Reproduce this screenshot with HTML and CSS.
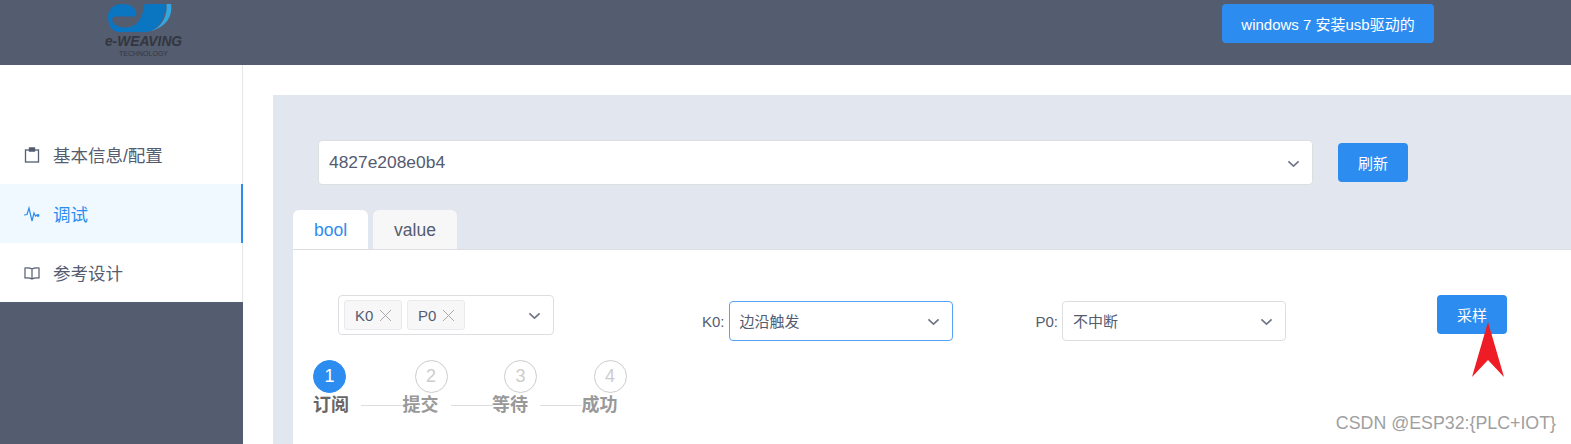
FILE: index.html
```html
<!DOCTYPE html>
<html lang="zh">
<head>
<meta charset="utf-8">
<title>调试</title>
<link rel="stylesheet" href="styles.css">
</head>
<body>
<header class="topbar">
  <div class="logo">
    <svg class="logo-mark" width="67" height="28" viewBox="0 0 67 28">
      <path fill="#33a7e2" d="M58.500 0H63C65 12 58 25 38 28C50 27 60 15 58.500 0Z"/>
      <path fill="#0a75c0" d="M14 0C22 0 28 3 28.300 10L28 12.500H8C4.500 13 3.500 15 4.500 17C6 21 10 23 16 23.500C24 24 30 20 33 13C35 8 36 4 36.500 0H57.500C57.500 12 52 27 37 28H10C3 27 0 20 0 13C0 5 6 0 14 0Z"/>
    </svg>
    <div class="logo-name">e-WEAVING</div>
    <div class="logo-sub">TECHNOLOGY</div>
  </div>
  <button class="btn btn-top">windows 7 安装usb驱动的</button>
</header>
<div class="body-row">
  <aside class="sidebar">
    <nav class="menu">
      <a class="menu-item">
        <svg class="menu-icon" viewBox="0 0 16 16" fill="none" stroke="currentColor" stroke-width="1.300"><rect x="1.500" y="3" width="13" height="12"/><path d="M5.500 1h5V4h-5z" fill="currentColor"/></svg>
        <span>基本信息/配置</span>
      </a>
      <a class="menu-item active">
        <svg class="menu-icon" viewBox="0 0 16 16" fill="none" stroke="currentColor" stroke-width="1.200"><path d="M0 9L3 8.500 5 2 8 15 10 7 11.500 10 13 9"/><circle cx="14" cy="9.500" r="1.400" fill="currentColor" stroke="none"/></svg>
        <span>调试</span>
      </a>
      <a class="menu-item">
        <svg class="menu-icon" viewBox="0 0 16 16" fill="none" stroke="currentColor" stroke-width="1.200"><path d="M8 4C6.500 3 4 2.800 1 3v10C4 12.800 6.500 13 8 14c1.500-1 4-1.200 7-1V3C12 2.800 9.500 3 8 4zM8 4v10"/></svg>
        <span>参考设计</span>
      </a>
    </nav>
    <div class="sidebar-fill"></div>
  </aside>
  <main class="main">
    <section class="panel">
      <div class="device-row">
        <div class="select select-device">
          <span>4827e208e0b4</span>
          <svg class="chev" viewBox="0 0 14 8"><path d="M1.500 1.500 7 6.500l5.500-5"/></svg>
        </div>
        <button class="btn btn-refresh">刷新</button>
      </div>
      <div class="tabs">
        <div class="tab active">bool</div>
        <div class="tab">value</div>
      </div>
      <div class="content">
        <div class="controls">
          <div class="select select-multi">
            <span class="tag">K0<i class="x"></i></span>
            <span class="tag">P0<i class="x"></i></span>
            <svg class="chev" viewBox="0 0 14 8"><path d="M1.500 1.500 7 6.500l5.500-5"/></svg>
          </div>
          <div class="field field-k">
            <label>K0:</label>
            <div class="select select-small focused">
              <span>边沿触发</span>
              <svg class="chev" viewBox="0 0 14 8"><path d="M1.500 1.500 7 6.500l5.500-5"/></svg>
            </div>
          </div>
          <div class="field field-p">
            <label>P0:</label>
            <div class="select select-small">
              <span>不中断</span>
              <svg class="chev" viewBox="0 0 14 8"><path d="M1.500 1.500 7 6.500l5.500-5"/></svg>
            </div>
          </div>
          <button class="btn btn-sample">采样</button>
        </div>
        <ol class="steps">
          <li class="step current"><span class="dot">1</span><span class="label">订阅</span></li>
          <li class="step"><span class="dot">2</span><span class="label">提交</span></li>
          <li class="step"><span class="dot">3</span><span class="label">等待</span></li>
          <li class="step last"><span class="dot">4</span><span class="label">成功</span></li>
        </ol>
      </div>
    </section>
  </main>
</div>
<svg class="arrow" width="34" height="56" viewBox="0 0 34 56"><path fill="#ee1c25" d="M17 0 33 55 17 38 1 55z"/></svg>
<div class="watermark">CSDN @ESP32:{PLC+IOT}</div>
</body>
</html>
```
FILE: styles.css
```css
* { box-sizing: border-box; }
html, body { margin: 0; padding: 0; height: 100%; overflow: hidden; }
body {
  position: relative;
  width: 1571px;
  height: 444px;
  font-family: "Liberation Sans", "Noto Sans CJK SC", sans-serif;
  color: #545c70;
  background: #fff;
}
.topbar {
  height: 65px;
  background: #545c70;
  display: flex;
  padding-left: 105px;
}
.logo { width: 77px; display: flex; flex-direction: column; align-items: center; padding-top: 4px; }
.logo-mark { display: block; width: 67px; height: 28px; flex: none; margin-left: -5px; }
.logo-name {
  font-style: italic; font-weight: 700; font-size: 13.800px; line-height: 14px;
  color: #33363e; margin-top: 3px; white-space: nowrap;
}
.logo-sub { font-size: 7px; line-height: 8px; color: #33363e; margin-top: 1px; }
.btn {
  border: 0; border-radius: 4px; background: #2d8cf0; color: #fff;
  font: inherit; font-size: 15px; padding: 0; text-align: center;
}
.btn-top { width: 212px; height: 39px; margin: 4px 0 0 1040px; }
.body-row { display: flex; height: 379px; }
.sidebar { width: 243px; flex: none; display: flex; flex-direction: column; }
.menu {
  height: 237px; padding-top: 60px; background: #fff;
  border-right: 1px solid #e6e6e6;
}
.menu-item {
  height: 59px; display: flex; align-items: center; gap: 13px;
  padding-left: 24px; font-size: 17.500px; color: #545c70; margin-right: -1px;
}
.menu-item.active { background: #f0f9ff; color: #2d8cf0; border-right: 2px solid #2d8cf0; }
.menu-icon { width: 16px; height: 16px; flex: none; }
.sidebar-fill { flex: 1; background: #545c70; }
.main { flex: 1; min-width: 0; padding: 30px 0 0 30px; }
.panel { background: #e2e6ee; height: 349px; padding-top: 45px; }
.device-row { display: flex; align-items: flex-start; padding-left: 45px; height: 70px; }
.select {
  background: #fff; border: 1px solid #dcdee2; border-radius: 4px;
  display: flex; align-items: center; position: relative; color: #545c70;
}
.select-device { width: 995px; height: 45px; padding-left: 10px; font-size: 17.400px; }
.chev { fill: none; stroke: #6f7587; stroke-width: 1.800; width: 13px; height: 7.500px; position: absolute; right: 12px; top: 50%; margin-top: -3px; }
.btn-refresh { width: 70px; height: 39px; margin: 3px 0 0 25px; }
.tabs { display: flex; gap: 5px; padding-left: 20px; height: 39px; }
.tab {
  height: 39px; padding: 0 21px; line-height: 40px; font-size: 17.500px;
  border-radius: 6px 6px 0 0; background: #f7f7f7; color: #545c70;
}
.tab.active { background: #fff; color: #2d8cf0; }
.content {
  margin-left: 20px; background: #fff; height: 195px;
  border-top: 1px solid #dcdee2; padding-top: 45px;
}
.controls { display: flex; align-items: flex-start; padding-left: 45px; height: 65px; }
.select-multi { width: 216px; height: 40px; padding-left: 5px; gap: 5px; }
.tag {
  height: 30px; width: 58px; border: 1px solid #e8eaec; border-radius: 3px; background: #f7f7f7;
  display: flex; align-items: center; padding-left: 10px; font-size: 15px; color: #545c70; gap: 7px;
}
.x { width: 11px; height: 11px; flex: none; background:
  linear-gradient(45deg, transparent 46%, #aaa 46%, #aaa 54%, transparent 54%),
  linear-gradient(-45deg, transparent 46%, #aaa 46%, #aaa 54%, transparent 54%); }
.field { display: flex; align-items: center; height: 40px; margin-top: 6px; gap: 4px; font-size: 15px; }
.field .select span { margin-top: -2px; }
.field-k { margin-left: 148px; }
.field-p { margin-left: 83px; }
.select-small { width: 224px; height: 40px; padding-left: 10px; font-size: 15px; }
.focused { border-color: #57a3f3; }
.btn-sample { width: 70px; height: 39px; margin-left: 151px; }
.steps { list-style: none; margin: 0; padding: 0 0 0 20px; display: flex; }
.step { width: 89.500px; display: flex; flex-direction: column; position: relative; }
.dot {
  width: 33px; height: 33px; border-radius: 50%; border: 1px solid #ccc; color: #ccc;
  display: flex; align-items: center; justify-content: center; font-size: 18px; background: #fff;
  margin-left: 12px;
}
.step.current .dot { background: #2d8cf0; border-color: #2d8cf0; color: #fff; margin-left: 0; }
.label { font-size: 18px; font-weight: 700; color: #999; line-height: 26px; margin-top: -1px; }
.step.current .label { color: #666; }
.step:not(.last)::after {
  content: ""; position: absolute; left: 48px; width: 42px; top: 45px; height: 1px; background: #dcdee2;
}
.arrow { position: absolute; left: 1471px; top: 322px; }
.watermark {
  position: absolute; right: 15px; top: 412px; font-size: 17.800px; line-height: 22px;
  color: #a0a0a0; white-space: nowrap;
}
```
